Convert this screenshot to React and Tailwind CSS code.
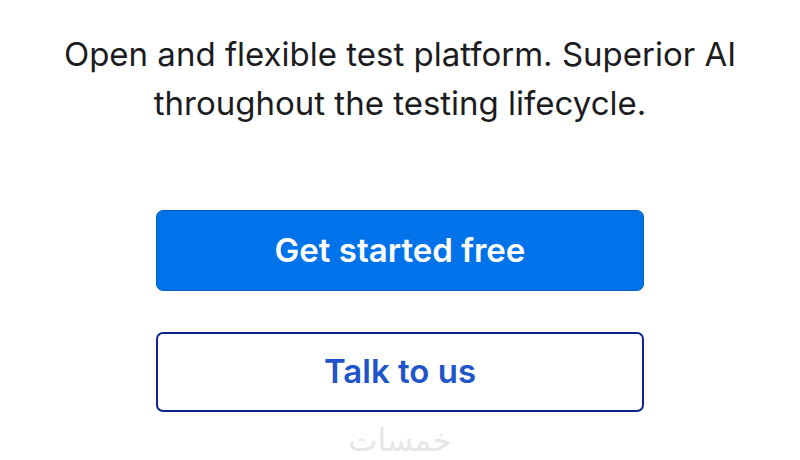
export default function App() {
  return (
    <div className="w-[800px] h-[460px] bg-white flex flex-col items-center overflow-hidden" style={{ fontFamily: 'Inter, "Noto Sans", sans-serif' }}>
      <p className="mt-[30px] text-[33px] leading-[49px] text-[#1c1c1f] text-center w-[760px]">
        Open and flexible test platform. Superior AI<br />throughout the testing lifecycle.
      </p>
      <button className="mt-[82px] w-[488px] h-[81px] rounded-[7px] bg-[#0073ea] border border-[#0a5bc4] text-white text-[33px] font-semibold flex items-center justify-center">
        Get started free
      </button>
      <button className="mt-[41px] w-[488px] h-[80px] rounded-[7px] bg-white border-2 border-[#12238a] text-[#1f55c8] text-[33px] font-semibold flex items-center justify-center">
        Talk to us
      </button>
      <div className="mt-[12px] text-[31px] leading-[32px] text-[#e6e6e6]" style={{ fontFamily: '"DejaVu Sans", sans-serif' }}>
        خمسات
      </div>
    </div>
  );
}
